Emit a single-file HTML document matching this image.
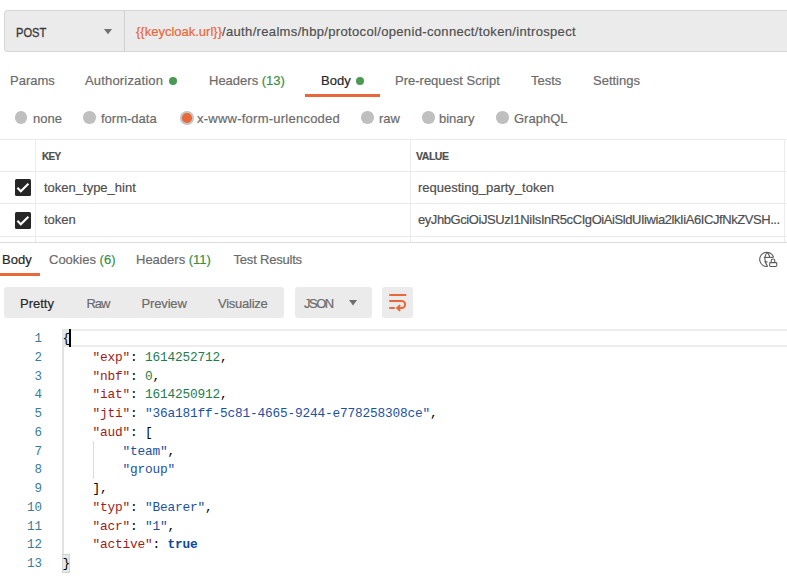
<!DOCTYPE html>
<html><head><meta charset="utf-8">
<style>
*{margin:0;padding:0;box-sizing:border-box}
html,body{width:787px;height:583px;overflow:hidden;background:#fff}
body{position:relative;font-family:"Liberation Sans",sans-serif;font-size:13px;color:#6b6b6b}
.a{position:absolute;white-space:nowrap;line-height:16px;-webkit-text-stroke:0.2px currentColor}
.bx{position:absolute}
.g{color:#3a8f45}
.dot{position:absolute;width:8px;height:8px;border-radius:50%;background:#4a9a52}
.rad{position:absolute;width:12.5px;height:12.5px;border-radius:50%;background:#bfbfbf;top:111.4px}
.hl{position:absolute;background:#e9e9e9}
.vl{position:absolute;background:#ececec}
.chk{position:absolute;left:15px;width:16px;height:16.5px;border-radius:1.5px;background:#262626}
.mono{font-family:"Liberation Mono",monospace;font-size:12.8px;letter-spacing:-0.18px}
.ln{position:absolute;right:745px;text-align:right;color:#387c98;line-height:18.75px;font-size:12.5px;letter-spacing:0;margin-top:1.5px}
.cl{position:absolute;left:62.5px;white-space:pre;color:#000;line-height:18.75px;margin-top:1.5px}
.k{color:#9e1a1a}.n{color:#1e7d4e}.s{color:#1a51a3}.t{color:#0d4ba0;font-weight:bold}
</style></head><body>
<!-- URL bar -->
<div class="bx" style="left:4px;top:10px;width:800px;height:42px;background:#ebebeb;border:1px solid #d6d6d6;border-radius:3px"></div>
<div class="bx" style="left:124px;top:11px;width:1px;height:40px;background:#d0d0d0"></div>
<div class="a" style="left:16.3px;top:24px;color:#3a3a3a;font-size:13.6px;transform:scaleX(0.82);transform-origin:0 0;-webkit-text-stroke:0.35px #3a3a3a;margin-top:0.7px">POST</div>
<svg class="bx" style="left:104px;top:29px" width="8" height="6"><path d="M0 0H8L4 5.2Z" fill="#707070"/></svg>
<div class="a" style="left:136px;top:24px;color:#505050"><span style="color:#e8683a">{{keycloak.url}}</span><span style="letter-spacing:0.34px">/auth/realms/hbp/protocol/openid-connect/token/introspect</span></div>

<!-- request tabs -->
<div class="a" style="left:10px;top:72.7px">Params</div>
<div class="a" style="left:85px;top:72.7px;letter-spacing:0.17px">Authorization</div><div class="dot" style="left:169px;top:76.5px"></div>
<div class="a" style="left:209px;top:72.7px">Headers <span class="g">(13)</span></div>
<div class="a" style="left:321px;top:72.7px;color:#282828">Body</div><div class="dot" style="left:356px;top:76.5px"></div>
<div class="bx" style="left:305px;top:94px;width:75px;height:3px;background:#e8683a"></div>
<div class="a" style="left:395px;top:72.7px">Pre-request Script</div>
<div class="a" style="left:531px;top:72.7px">Tests</div>
<div class="a" style="left:593px;top:72.7px">Settings</div>

<!-- radios -->
<div class="rad" style="left:14.5px"></div><div class="a" style="left:33px;top:110.7px">none</div>
<div class="rad" style="left:83px"></div><div class="a" style="left:101px;top:110.7px">form-data</div>
<div class="rad" style="left:180.1px;width:13.6px;height:13.6px;background:#e8683a;border:2.9px solid #c4c4c4"></div><div class="a" style="left:197px;top:110.7px;letter-spacing:0.24px">x-www-form-urlencoded</div>
<div class="rad" style="left:361px"></div><div class="a" style="left:379px;top:110.7px">raw</div>
<div class="rad" style="left:422px"></div><div class="a" style="left:439px;top:110.7px">binary</div>
<div class="rad" style="left:496px"></div><div class="a" style="left:514px;top:110.7px">GraphQL</div>

<!-- table -->
<div class="hl" style="left:0;top:139px;width:787px;height:1px"></div>
<div class="hl" style="left:0;top:171px;width:787px;height:1px"></div>
<div class="hl" style="left:0;top:203px;width:787px;height:1px"></div>
<div class="hl" style="left:0;top:236px;width:787px;height:1px"></div>
<div class="hl" style="left:0;top:242px;width:787px;height:1px;background:#dcdcdc"></div>
<div class="vl" style="left:35px;top:139px;width:1px;height:103px"></div>
<div class="vl" style="left:410px;top:139px;width:1px;height:103px"></div>
<div class="vl" style="left:784px;top:139px;width:1px;height:103px"></div>
<div class="a" style="left:42px;top:148px;font-size:10px;font-weight:bold;color:#505050;letter-spacing:-0.7px;margin-top:0.5px">KEY</div>
<div class="a" style="left:416px;top:148px;font-size:10.5px;font-weight:bold;color:#505050;letter-spacing:-0.45px">VALUE</div>
<div class="chk" style="top:179px"></div>
<svg class="bx" style="left:15px;top:179px" width="16" height="17"><path d="M2.4 8.7L5.8 12.3L13.4 4.8" stroke="#fff" stroke-width="2.1" fill="none"/></svg>
<div class="chk" style="top:212px"></div>
<svg class="bx" style="left:15px;top:212px" width="16" height="17"><path d="M2.4 8.7L5.8 12.3L13.4 4.8" stroke="#fff" stroke-width="2.1" fill="none"/></svg>
<div class="a" style="left:44px;top:180px;color:#4f4f4f">token_type_hint</div>
<div class="a" style="left:418px;top:180px;color:#4f4f4f">requesting_party_token</div>
<div class="a" style="left:44px;top:212px;color:#4f4f4f">token</div>
<div class="a" style="left:418px;top:212px;color:#4f4f4f;letter-spacing:-0.43px">eyJhbGciOiJSUzI1NiIsInR5cCIgOiAiSldUIiwia2lkIiA6ICJfNkZVSH...</div>

<!-- response tabs -->
<div class="a" style="left:2px;top:252px;color:#282828">Body</div>
<div class="bx" style="left:0;top:273px;width:40px;height:3px;background:#e8683a"></div>
<div class="a" style="left:49px;top:252px">Cookies <span class="g">(6)</span></div>
<div class="a" style="left:136px;top:252px">Headers <span class="g">(11)</span></div>
<div class="a" style="left:233.5px;top:252px;letter-spacing:-0.2px">Test Results</div>
<svg class="bx" style="left:747px;top:245px" width="40" height="30" viewBox="0 0 40 30" fill="none" stroke="#5a5a5a" stroke-width="1.1">
 <path d="M26.6 12.4A7.1 7.1 0 1 0 20.6 21.5"/>
 <path d="M20.4 7.6C17.5 10 16.5 15.5 20.6 21.5"/>
 <path d="M20.4 7.6C21.6 9 22.4 10.5 22.7 12.4"/>
 <path d="M16.8 12.4H26.2"/>
 <path d="M17.4 16.9H20.6"/>
 <rect x="22.6" y="17.6" width="7.2" height="3.9" rx="0.9"/>
 <path d="M24.2 17.6V15.8A1.8 1.8 0 0 1 27.8 15.8V17.6"/>
</svg>

<!-- response toolbar -->
<div class="bx" style="left:4px;top:287px;width:280px;height:31px;background:#ebebeb;border-radius:3px"></div>
<div class="a" style="left:20px;top:296px;color:#282828">Pretty</div>
<div class="a" style="left:86.5px;top:296px;letter-spacing:-1.1px">Raw</div>
<div class="a" style="left:141.5px;top:296px;letter-spacing:-0.15px">Preview</div>
<div class="a" style="left:218px;top:296px;letter-spacing:-0.25px">Visualize</div>
<div class="bx" style="left:295px;top:287px;width:77px;height:31px;background:#ebebeb;border-radius:3px"></div>
<div class="a" style="left:304px;top:296px;letter-spacing:-1.5px">JSON</div>
<svg class="bx" style="left:349px;top:300px" width="8" height="6"><path d="M0 0H8L4 5.5Z" fill="#6e6e6e"/></svg>
<div class="bx" style="left:382px;top:287px;width:31px;height:31px;background:#ebebeb;border-radius:3px"></div>
<svg class="bx" style="left:382px;top:287px" width="31" height="31" fill="none" stroke="#e8683a" stroke-width="2" stroke-linecap="round">
 <path d="M8 8H23.5"/><path d="M8 14H19.6A3.5 3.5 0 0 1 19.6 21H16"/><path d="M8 21H12"/><path d="M17.6 18.6L15.2 21L17.6 23.4"/>
</svg>

<!-- code -->
<div class="vl" style="left:62px;top:329px;width:1.6px;height:225px;background:#e2e2e2"></div>
<div class="hl" style="left:63px;top:328.6px;width:724px;height:2px;background:#ededed"></div>
<div class="hl" style="left:63px;top:344.6px;width:724px;height:2px;background:#ededed"></div>
<div class="bx" style="left:62.5px;top:328.6px;width:7.5px;height:18px;background:#e3e7e3"></div>
<div class="bx" style="left:62.2px;top:554px;width:7.7px;height:18.5px;background:#e6eae6;border:1px solid #d2d4d2"></div>
<div class="bx" style="left:69px;top:328.6px;width:2px;height:18px;background:#000"></div>
<div class="bx" style="left:92.5px;top:441px;width:1px;height:37.5px;background:#dcdcdc"></div>
<div class="mono">
<div class="ln" style="top:328.60px">1</div>
<div class="cl" style="top:328.60px"><span>{</span></div>
<div class="ln" style="top:347.35px">2</div>
<div class="cl" style="top:347.35px">    <span class="k">"exp"</span>: <span class="n">1614252712</span>,</div>
<div class="ln" style="top:366.10px">3</div>
<div class="cl" style="top:366.10px">    <span class="k">"nbf"</span>: <span class="n">0</span>,</div>
<div class="ln" style="top:384.85px">4</div>
<div class="cl" style="top:384.85px">    <span class="k">"iat"</span>: <span class="n">1614250912</span>,</div>
<div class="ln" style="top:403.60px">5</div>
<div class="cl" style="top:403.60px">    <span class="k">"jti"</span>: <span class="s">"36a181ff-5c81-4665-9244-e778258308ce"</span>,</div>
<div class="ln" style="top:422.35px">6</div>
<div class="cl" style="top:422.35px">    <span class="k">"aud"</span>: [</div>
<div class="ln" style="top:441.10px">7</div>
<div class="cl" style="top:441.10px">        <span class="s">"team"</span>,</div>
<div class="ln" style="top:459.85px">8</div>
<div class="cl" style="top:459.85px">        <span class="s">"group"</span></div>
<div class="ln" style="top:478.60px">9</div>
<div class="cl" style="top:478.60px">    ],</div>
<div class="ln" style="top:497.35px">10</div>
<div class="cl" style="top:497.35px">    <span class="k">"typ"</span>: <span class="s">"Bearer"</span>,</div>
<div class="ln" style="top:516.10px">11</div>
<div class="cl" style="top:516.10px">    <span class="k">"acr"</span>: <span class="s">"1"</span>,</div>
<div class="ln" style="top:534.85px">12</div>
<div class="cl" style="top:534.85px">    <span class="k">"active"</span>: <span class="t">true</span></div>
<div class="ln" style="top:553.60px">13</div>
<div class="cl" style="top:553.60px"><span>}</span></div>
</div>
</body></html>
